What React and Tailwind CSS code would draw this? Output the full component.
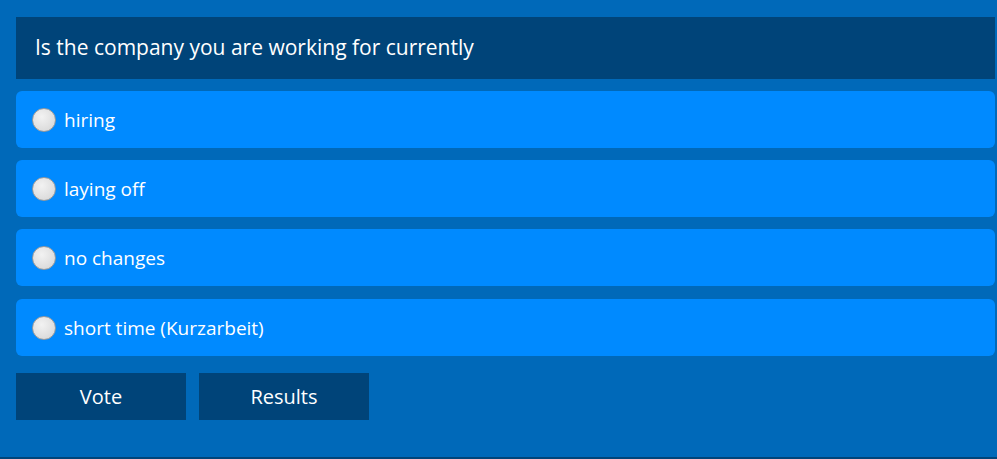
const options = ['hiring', 'laying off', 'no changes', 'short time (Kurzarbeit)'];

export default function App() {
  return (
    <div
      className="h-[459px] w-[997px] bg-[#0069b9] border-b-2 border-[#00457a] pl-4 pr-[2px] pt-[17px] text-white"
      style={{ fontFamily: '"Open Sans", sans-serif' }}
    >
      <div className="flex h-[62px] items-center bg-[#004479] px-[19px] text-[21px]">
        Is the company you are working for currently
      </div>

      <div className="mt-3 flex flex-col gap-3">
        {options.map((opt, i) => (
          <label
            key={opt}
            className={`flex h-[57px] items-center gap-2 rounded-md bg-[#008aff] pl-4 text-[19px] ${i === 3 ? 'mt-[1px]' : ''}`}
          >
            <span className="h-[24px] w-[24px] rounded-full border border-[#9a9a9a] bg-[radial-gradient(circle_at_40%_35%,#f2f2f2,#d4d4d4)]" />
            <span className="mt-[2px]">{opt}</span>
          </label>
        ))}
      </div>

      <div className="mt-[17px] flex gap-[13px]">
        <button className="h-[47px] w-[170px] bg-[#004479] text-[20px] text-white">Vote</button>
        <button className="h-[47px] w-[170px] bg-[#004479] text-[20px] text-white">Results</button>
      </div>
    </div>
  );
}
